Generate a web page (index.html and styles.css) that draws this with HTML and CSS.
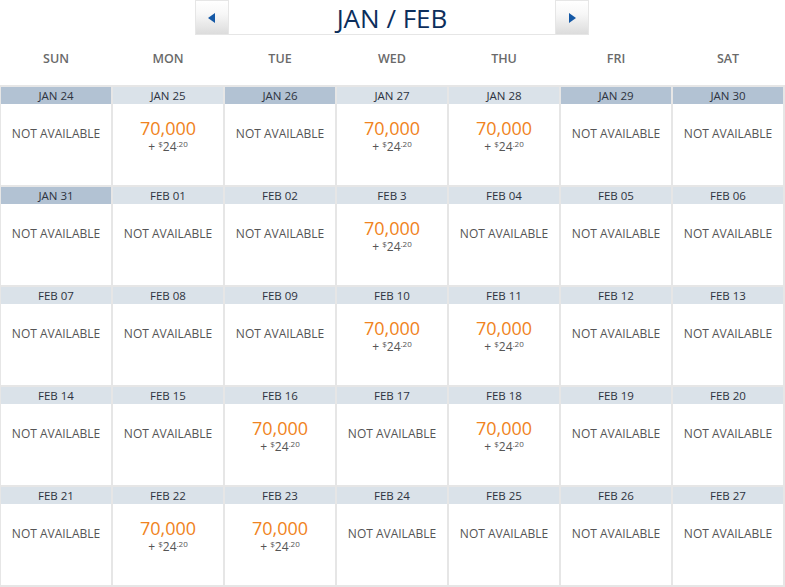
FILE: index.html
```html
<!DOCTYPE html>
<html>
<head>
<meta charset="utf-8">
<link rel="stylesheet" href="styles.css">
</head>
<body>
<div class="nav">
  <button class="nav-btn"><svg width="8" height="10" viewBox="0 0 8 10"><path d="M7 0 L0 5 L7 10 Z" fill="#1559a6"/></svg></button>
  <div class="title">JAN / FEB</div>
  <button class="nav-btn"><svg width="8" height="10" viewBox="0 0 8 10"><path d="M1 0 L8 5 L1 10 Z" fill="#1559a6"/></svg></button>
</div>
<div class="days">
  <div>SUN</div><div>MON</div><div>TUE</div><div>WED</div><div>THU</div><div>FRI</div><div>SAT</div>
</div>
<div class="grid">
  <div class="cell"><div class="date past">JAN 24</div><div class="body na">NOT AVAILABLE</div></div>
  <div class="cell"><div class="date">JAN 25</div><div class="body"><div class="miles">70,000</div><div class="fee">+ <sup>$</sup>24<sup>.20</sup></div></div></div>
  <div class="cell"><div class="date past">JAN 26</div><div class="body na">NOT AVAILABLE</div></div>
  <div class="cell"><div class="date">JAN 27</div><div class="body"><div class="miles">70,000</div><div class="fee">+ <sup>$</sup>24<sup>.20</sup></div></div></div>
  <div class="cell"><div class="date">JAN 28</div><div class="body"><div class="miles">70,000</div><div class="fee">+ <sup>$</sup>24<sup>.20</sup></div></div></div>
  <div class="cell"><div class="date past">JAN 29</div><div class="body na">NOT AVAILABLE</div></div>
  <div class="cell"><div class="date past">JAN 30</div><div class="body na">NOT AVAILABLE</div></div>

  <div class="cell"><div class="date past">JAN 31</div><div class="body na">NOT AVAILABLE</div></div>
  <div class="cell"><div class="date">FEB 01</div><div class="body na">NOT AVAILABLE</div></div>
  <div class="cell"><div class="date">FEB 02</div><div class="body na">NOT AVAILABLE</div></div>
  <div class="cell"><div class="date">FEB 3</div><div class="body"><div class="miles">70,000</div><div class="fee">+ <sup>$</sup>24<sup>.20</sup></div></div></div>
  <div class="cell"><div class="date">FEB 04</div><div class="body na">NOT AVAILABLE</div></div>
  <div class="cell"><div class="date">FEB 05</div><div class="body na">NOT AVAILABLE</div></div>
  <div class="cell"><div class="date">FEB 06</div><div class="body na">NOT AVAILABLE</div></div>

  <div class="cell"><div class="date">FEB 07</div><div class="body na">NOT AVAILABLE</div></div>
  <div class="cell"><div class="date">FEB 08</div><div class="body na">NOT AVAILABLE</div></div>
  <div class="cell"><div class="date">FEB 09</div><div class="body na">NOT AVAILABLE</div></div>
  <div class="cell"><div class="date">FEB 10</div><div class="body"><div class="miles">70,000</div><div class="fee">+ <sup>$</sup>24<sup>.20</sup></div></div></div>
  <div class="cell"><div class="date">FEB 11</div><div class="body"><div class="miles">70,000</div><div class="fee">+ <sup>$</sup>24<sup>.20</sup></div></div></div>
  <div class="cell"><div class="date">FEB 12</div><div class="body na">NOT AVAILABLE</div></div>
  <div class="cell"><div class="date">FEB 13</div><div class="body na">NOT AVAILABLE</div></div>

  <div class="cell"><div class="date">FEB 14</div><div class="body na">NOT AVAILABLE</div></div>
  <div class="cell"><div class="date">FEB 15</div><div class="body na">NOT AVAILABLE</div></div>
  <div class="cell"><div class="date">FEB 16</div><div class="body"><div class="miles">70,000</div><div class="fee">+ <sup>$</sup>24<sup>.20</sup></div></div></div>
  <div class="cell"><div class="date">FEB 17</div><div class="body na">NOT AVAILABLE</div></div>
  <div class="cell"><div class="date">FEB 18</div><div class="body"><div class="miles">70,000</div><div class="fee">+ <sup>$</sup>24<sup>.20</sup></div></div></div>
  <div class="cell"><div class="date">FEB 19</div><div class="body na">NOT AVAILABLE</div></div>
  <div class="cell"><div class="date">FEB 20</div><div class="body na">NOT AVAILABLE</div></div>

  <div class="cell"><div class="date">FEB 21</div><div class="body na">NOT AVAILABLE</div></div>
  <div class="cell"><div class="date">FEB 22</div><div class="body"><div class="miles">70,000</div><div class="fee">+ <sup>$</sup>24<sup>.20</sup></div></div></div>
  <div class="cell"><div class="date">FEB 23</div><div class="body"><div class="miles">70,000</div><div class="fee">+ <sup>$</sup>24<sup>.20</sup></div></div></div>
  <div class="cell"><div class="date">FEB 24</div><div class="body na">NOT AVAILABLE</div></div>
  <div class="cell"><div class="date">FEB 25</div><div class="body na">NOT AVAILABLE</div></div>
  <div class="cell"><div class="date">FEB 26</div><div class="body na">NOT AVAILABLE</div></div>
  <div class="cell"><div class="date">FEB 27</div><div class="body na">NOT AVAILABLE</div></div>
</div>
</body>
</html>
```
FILE: styles.css
```css
* { box-sizing: border-box; }
html, body { margin: 0; padding: 0; background: #fff; }
body {
  font-family: "Open Sans", "Noto Sans", sans-serif;
  width: 785px;
  height: 587px;
  overflow: hidden;
}
.nav {
  display: flex;
  width: 394px;
  height: 36px;
  margin-left: 195px;
}
.nav-btn {
  width: 34px;
  height: 35px;
  border: 1px solid #e6e6e6;
  background: linear-gradient(#ffffff 0%, #f7f7f7 40%, #dcdcdc 100%);
  padding: 0;
  display: flex;
  align-items: center;
  justify-content: center;
}
.title {
  flex: 1;
  height: 35px;
  border-bottom: 1px solid #e6e6e6;
  text-align: center;
  font-size: 26px;
  line-height: 36px;
  color: #0c2e5c;
}
.days {
  display: grid;
  grid-template-columns: repeat(7, 110px);
  column-gap: 2px;
  padding: 14px 2px 0 1px;
  height: 49px;
}
.days div {
  text-align: center;
  font-size: 12.5px;
  font-weight: 600;
  color: #6a6a6a;
  line-height: 18px;
}
.grid {
  display: grid;
  grid-template-columns: repeat(7, 110px);
  grid-auto-rows: 98px;
  gap: 2px;
  padding: 2px 2px 2px 1px;
  background: #e6e6e6;
  height: 502px;
}
.cell {
  display: flex;
  flex-direction: column;
  background: #fff;
}
.date {
  height: 17px;
  background: #dae2e9;
  text-align: center;
  font-size: 11.5px;
  line-height: 17px;
  color: #2d3340;
}
.date.past { background: #b2c2d3; }
.body {
  flex: 1;
  text-align: center;
  padding-top: 14px;
}
.body.na {
  padding-top: 22px;
  font-size: 12px;
  line-height: 16px;
  color: #555;
}
.miles {
  font-size: 18px;
  line-height: 20px;
  color: #f08321;
}
.fee {
  font-size: 12px;
  line-height: 18px;
  color: #555;
}
.fee sup {
  font-size: 8px;
  vertical-align: 4px;
  line-height: 0;
}
```
